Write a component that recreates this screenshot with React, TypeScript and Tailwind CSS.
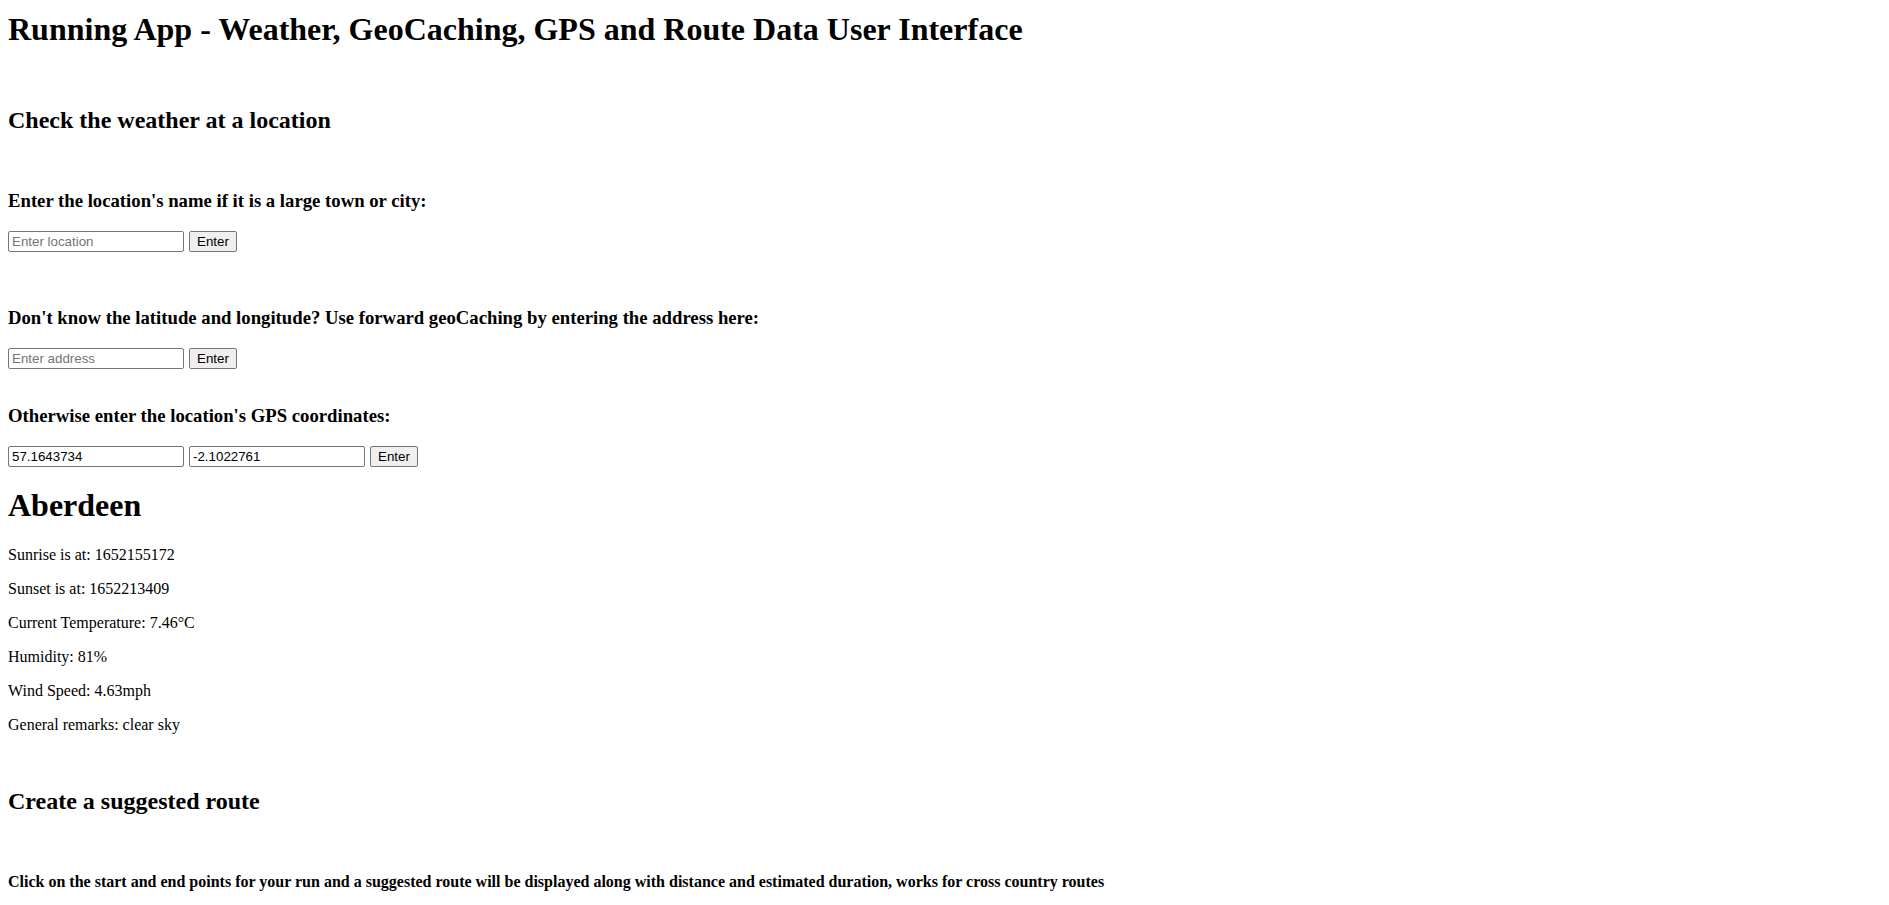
import React from "react";

function InputBox({ placeholder, value }: { placeholder?: string; value?: string }) {
  return (
    <input
      type="text"
      placeholder={placeholder}
      defaultValue={value}
      className="w-[176px] h-[21px] border border-[#767676] rounded-[2px] px-[3px] text-[13.3333px] leading-[17px] font-['Liberation_Sans',Arial,sans-serif] text-black placeholder:text-[#757575] bg-white outline-none"
    />
  );
}

function EnterButton() {
  return (
    <button
      type="button"
      className="w-[48px] h-[21px] border border-[#767676] rounded-[2px] bg-[#efefef] text-[13.3333px] leading-[17px] font-['Liberation_Sans',Arial,sans-serif] text-black flex items-center justify-center"
    >
      Enter
    </button>
  );
}

export default function App() {
  const weather = [
    "Sunrise is at: 1652155172",
    "Sunset is at: 1652213409",
    "Current Temperature: 7.46°C",
    "Humidity: 81%",
    "Wind Speed: 4.63mph",
    "General remarks: clear sky",
  ];
  return (
    <div className="min-h-screen bg-white text-black font-['Liberation_Serif','Times_New_Roman',serif] px-2 pt-[11px] flex flex-col items-start">
      <h1 className="text-[32px] font-bold leading-[37px]">
        Running App - Weather, GeoCaching, GPS and Route Data User Interface
      </h1>
      <h2 className="text-[24px] font-bold leading-[27px] mt-[59px]">Check the weather at a location</h2>

      <h3 className="text-[18.72px] font-bold leading-[22px] mt-[56px]">
        Enter the location's name if it is a large town or city:
      </h3>
      <div className="flex items-start gap-[5px] mt-[19px]">
        <InputBox placeholder="Enter location" />
        <EnterButton />
      </div>

      <h3 className="text-[18.72px] font-bold leading-[22px] mt-[55px]">
        Don't know the latitude and longitude? Use forward geoCaching by entering the address here:
      </h3>
      <div className="flex items-start gap-[5px] mt-[19px]">
        <InputBox placeholder="Enter address" />
        <EnterButton />
      </div>

      <h3 className="text-[18.72px] font-bold leading-[22px] mt-[36px]">
        Otherwise enter the location's GPS coordinates:
      </h3>
      <div className="flex items-start gap-[5px] mt-[19px]">
        <InputBox value="57.1643734" />
        <InputBox value="-2.1022761" />
        <EnterButton />
      </div>

      <h1 className="text-[32px] font-bold leading-[37px] mt-[20px]">Aberdeen</h1>
      <div className="flex flex-col items-start mt-[22px] gap-[16px]">
        {weather.map((w) => (
          <p key={w} className="text-[16px] leading-[18px]">
            {w}
          </p>
        ))}
      </div>

      <h2 className="text-[24px] font-bold leading-[27px] mt-[54px]">Create a suggested route</h2>
      <h4 className="text-[16px] font-bold leading-[18px] mt-[58px]">
        Click on the start and end points for your run and a suggested route will be displayed along with distance and estimated duration, works for cross country routes
      </h4>
    </div>
  );
}
